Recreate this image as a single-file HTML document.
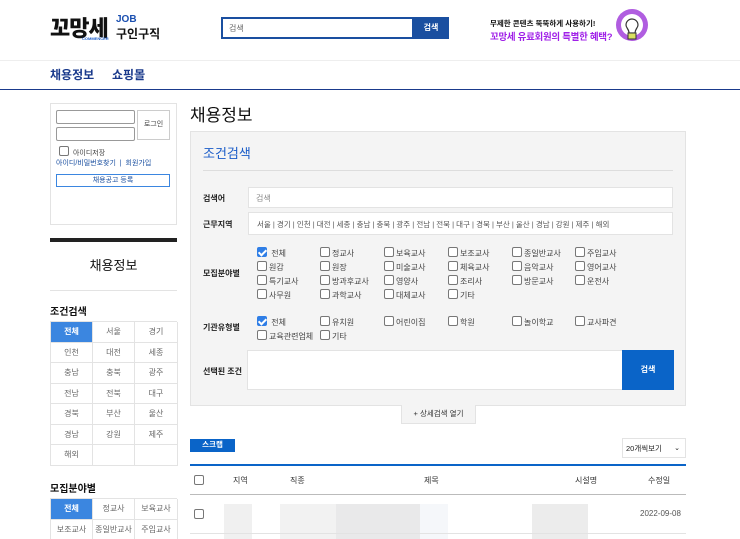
<!DOCTYPE html>
<html><head><meta charset="utf-8"><style>
*{margin:0;padding:0;box-sizing:border-box}
html,body{width:740px;height:539px;overflow:hidden}
body{background:#fff;font-family:"Liberation Sans","Noto Sans CJK KR",sans-serif;color:#333;position:relative}
.a{position:absolute}
.cb{display:inline-block;width:10px;height:10px;border:1px solid #777;border-radius:2px;background:#fff;vertical-align:-1px;margin-right:2px}
.ck{background:#2f7ee6;border-color:#2f7ee6;position:relative}
.ck:after{content:"";position:absolute;left:2px;top:0px;width:3px;height:6px;border:solid #fff;border-width:0 2px 2px 0;transform:rotate(45deg)}
.row{position:absolute;font-size:8px;color:#444;white-space:nowrap}
.row span{position:absolute}
.grid{position:absolute;left:50px;width:127px;display:grid;grid-template-columns:42px 42px 43px;border-top:1px solid #e3e3e3;border-left:1px solid #e3e3e3}
.grid div{height:20.5px;border-right:1px solid #e3e3e3;border-bottom:1px solid #e3e3e3;font-size:8px;color:#666;text-align:center;line-height:20px}
.grid .on{background:#3b86e0;color:#fff;font-weight:bold}
.lab{position:absolute;left:203px;font-size:8px;color:#222;font-weight:bold}
</style></head><body>
<div class="a" style="left:50px;top:11px;font-size:22px;font-weight:900;color:#111;letter-spacing:-1px">꼬망세</div>
<div class="a" style="left:82px;top:36px;font-size:4px;color:#1a5cc8;font-weight:bold">COMMENCER</div>
<div class="a" style="left:116px;top:14px;font-size:10px;color:#1a4fb0;font-weight:bold">JOB</div>
<div class="a" style="left:116px;top:25px;font-size:12px;color:#111;font-weight:bold">구인구직</div>
<div class="a" style="left:221px;top:17px;width:193px;height:22px;border:2px solid #1a4fa0;font-size:8px;color:#666;padding:4px 6px">검색</div>
<div class="a" style="left:413px;top:17px;width:36px;height:22px;background:#1a4fa0;color:#fff;font-size:8px;font-weight:bold;text-align:center;line-height:22px">검색</div>
<div class="a" style="left:490px;top:18px;font-size:7.5px;color:#111;font-weight:bold">무제한 콘텐츠 뚝뚝하게 사용하기!</div>
<div class="a" style="left:490px;top:29px;font-size:9.5px;color:#a020e8;font-weight:bold;letter-spacing:-0.3px">꼬망세 유료회원의 특별한 혜택?</div>
<svg class="a" style="left:612px;top:6px" width="40" height="40"><circle cx="20" cy="19" r="16" fill="#b05de0"/><circle cx="20" cy="19" r="11" fill="#fff"/><path d="M14 19a6 6 0 1 1 12 0c0 3-3 4-3 8h-6c0-4-3-5-3-8z" fill="#fff" stroke="#333" stroke-width="1.2"/><rect x="16" y="27" width="8" height="6" fill="#d8e060" stroke="#333" stroke-width="1"/></svg>
<div class="a" style="left:0;top:60px;width:740px;height:1px;background:#eee"></div>
<div class="a" style="left:50px;top:66px;font-size:12px;font-weight:bold;color:#1a3a8c">채용정보</div>
<div class="a" style="left:112px;top:66px;font-size:12px;font-weight:bold;color:#1a3a8c">쇼핑몰</div>
<div class="a" style="left:0;top:89px;width:740px;height:1px;background:#1a3a8c"></div>
<div class="a" style="left:50px;top:103px;width:127px;height:122px;border:1px solid #e3e3e3"></div>
<div class="a" style="left:56px;top:110px;width:79px;height:14px;border:1px solid #999;border-radius:2px"></div>
<div class="a" style="left:56px;top:127px;width:79px;height:14px;border:1px solid #999;border-radius:2px"></div>
<div class="a" style="left:137px;top:110px;width:33px;height:30px;border:1px solid #ccc;font-size:7px;text-align:center;line-height:28px;color:#444">로그인</div>
<div class="a" style="left:59px;top:146px;font-size:7px;color:#444"><span class="cb"></span> 아이디저장</div>
<div class="a" style="left:56px;top:158px;font-size:7px;color:#1a4fa0">아이디/비밀번호찾기 &nbsp;| &nbsp;회원가입</div>
<div class="a" style="left:56px;top:174px;width:114px;height:13px;border:1px solid #3b86e0;font-size:7px;text-align:center;line-height:11px;color:#1a4fa0">채용공고 등록</div>
<div class="a" style="left:50px;top:238px;width:127px;height:4px;background:#222"></div>
<div class="a" style="left:50px;top:255px;width:127px;text-align:center;font-size:13px;color:#111">채용정보</div>
<div class="a" style="left:50px;top:290px;width:127px;height:1px;background:#e3e3e3"></div>
<div class="a" style="left:50px;top:303px;font-size:10px;font-weight:bold;color:#111">조건검색</div>
<div class="grid" style="top:321px"><div class="on">전체</div><div>서울</div><div>경기</div><div>인천</div><div>대전</div><div>세종</div><div>충남</div><div>충북</div><div>광주</div><div>전남</div><div>전북</div><div>대구</div><div>경북</div><div>부산</div><div>울산</div><div>경남</div><div>강원</div><div>제주</div><div>해외</div><div></div><div></div></div>
<div class="a" style="left:50px;top:480px;font-size:10px;font-weight:bold;color:#111">모집분야별</div>
<div class="grid" style="top:498px"><div class="on">전체</div><div>정교사</div><div>보육교사</div><div>보조교사</div><div>종일반교사</div><div>주임교사</div></div>
<div class="a" style="left:190px;top:101px;font-size:17px;color:#111">채용정보</div>
<div class="a" style="left:190px;top:131px;width:496px;height:275px;background:#f4f4f4;border:1px solid #e3e3e3"></div>
<div class="a" style="left:203px;top:143px;font-size:13px;color:#1a5cc8">조건검색</div>
<div class="a" style="left:203px;top:170px;width:470px;height:1px;background:#ddd"></div>
<div class="lab" style="top:193px">검색어</div>
<div class="a" style="left:248px;top:187px;width:425px;height:21px;background:#fff;border:1px solid #e3e3e3;font-size:8px;color:#888;padding:5px 7px">검색</div>
<div class="lab" style="top:219px">근무지역</div>
<div class="a" style="left:248px;top:212px;width:425px;height:23px;background:#fff;border:1px solid #e3e3e3;font-size:7.5px;color:#555;padding:6px 8px;white-space:nowrap">서울 | 경기 | 인천 | 대전 | 세종 | 충남 | 충북 | 광주 | 전남 | 전북 | 대구 | 경북 | 부산 | 울산 | 경남 | 강원 | 제주 | 해외</div>
<div class="lab" style="top:268px">모집분야별</div>
<div class="row" style="left:257px;top:247px"><span style="left:0"><i class="cb ck"></i> 전체</span><span style="left:63px"><i class="cb"></i>정교사</span><span style="left:127px"><i class="cb"></i>보육교사</span><span style="left:191px"><i class="cb"></i>보조교사</span><span style="left:255px"><i class="cb"></i>종일반교사</span><span style="left:318px"><i class="cb"></i>주임교사</span></div>
<div class="row" style="left:257px;top:261px"><span style="left:0"><i class="cb"></i>원감</span><span style="left:63px"><i class="cb"></i>원장</span><span style="left:127px"><i class="cb"></i>미술교사</span><span style="left:191px"><i class="cb"></i>체육교사</span><span style="left:255px"><i class="cb"></i>음악교사</span><span style="left:318px"><i class="cb"></i>영어교사</span></div>
<div class="row" style="left:257px;top:275px"><span style="left:0"><i class="cb"></i>특기교사</span><span style="left:63px"><i class="cb"></i>방과후교사</span><span style="left:127px"><i class="cb"></i>영양사</span><span style="left:191px"><i class="cb"></i>조리사</span><span style="left:255px"><i class="cb"></i>방문교사</span><span style="left:318px"><i class="cb"></i>운전사</span></div>
<div class="row" style="left:257px;top:289px"><span style="left:0"><i class="cb"></i>사무원</span><span style="left:63px"><i class="cb"></i>과학교사</span><span style="left:127px"><i class="cb"></i>대체교사</span><span style="left:191px"><i class="cb"></i>기타</span></div>
<div class="lab" style="top:322px">기관유형별</div>
<div class="row" style="left:257px;top:316px"><span style="left:0"><i class="cb ck"></i> 전체</span><span style="left:63px"><i class="cb"></i>유치원</span><span style="left:127px"><i class="cb"></i>어린이집</span><span style="left:191px"><i class="cb"></i>학원</span><span style="left:255px"><i class="cb"></i>놀이학교</span><span style="left:318px"><i class="cb"></i>교사파견</span></div>
<div class="row" style="left:257px;top:330px"><span style="left:0"><i class="cb"></i>교육관련업체</span><span style="left:63px"><i class="cb"></i>기타</span></div>
<div class="lab" style="top:366px">선택된 조건</div>
<div class="a" style="left:247px;top:350px;width:376px;height:40px;background:#fff;border:1px solid #e3e3e3"></div>
<div class="a" style="left:622px;top:350px;width:52px;height:40px;background:#0a64c8;color:#fff;font-size:8px;font-weight:bold;text-align:center;line-height:40px">검색</div>
<div class="a" style="left:401px;top:405px;width:75px;height:19px;background:#f4f4f4;border:1px solid #e3e3e3;border-top:none;font-size:7.5px;text-align:center;line-height:18px;color:#333">+ 상세검색 열기</div>
<div class="a" style="left:190px;top:439px;width:45px;height:13px;background:#0a64c8;color:#fff;font-size:7.5px;font-weight:bold;text-align:center;line-height:12px">스크랩</div>
<div class="a" style="left:622px;top:438px;width:64px;height:20px;border:1px solid #e3e3e3;font-size:7.5px;line-height:19px;padding-left:3px;color:#222">20개씩보기 <span style="position:absolute;right:5px;font-size:7px">⌄</span></div>
<div class="a" style="left:190px;top:464px;width:496px;height:2px;background:#0a64c8"></div>
<div class="a" style="left:194px;top:475px;font-size:8px"><i class="cb"></i></div>
<div class="a" style="left:233px;top:475px;font-size:8px;color:#333">지역</div>
<div class="a" style="left:290px;top:475px;font-size:8px;color:#333">직종</div>
<div class="a" style="left:424px;top:475px;font-size:8px;color:#333">제목</div>
<div class="a" style="left:575px;top:475px;font-size:8px;color:#333">시설명</div>
<div class="a" style="left:648px;top:475px;font-size:8px;color:#333">수정일</div>
<div class="a" style="left:190px;top:494px;width:496px;height:1px;background:#bbb"></div>
<div class="a" style="left:194px;top:509px;font-size:8px"><i class="cb"></i></div>
<div class="a" style="left:224px;top:504px;width:28px;height:35px;background:#f0f0f0"></div>
<div class="a" style="left:280px;top:504px;width:60px;height:35px;background:#f2f2f2"></div>
<div class="a" style="left:336px;top:504px;width:84px;height:35px;background:#e9e9ea"></div>
<div class="a" style="left:420px;top:504px;width:28px;height:35px;background:#f5f7fa"></div>
<div class="a" style="left:532px;top:504px;width:56px;height:35px;background:#ececec"></div>
<div class="a" style="left:640px;top:509px;font-size:8px;color:#555">2022-09-08</div>
<div class="a" style="left:190px;top:533px;width:496px;height:1px;background:#e3e3e3"></div>
</body></html>
